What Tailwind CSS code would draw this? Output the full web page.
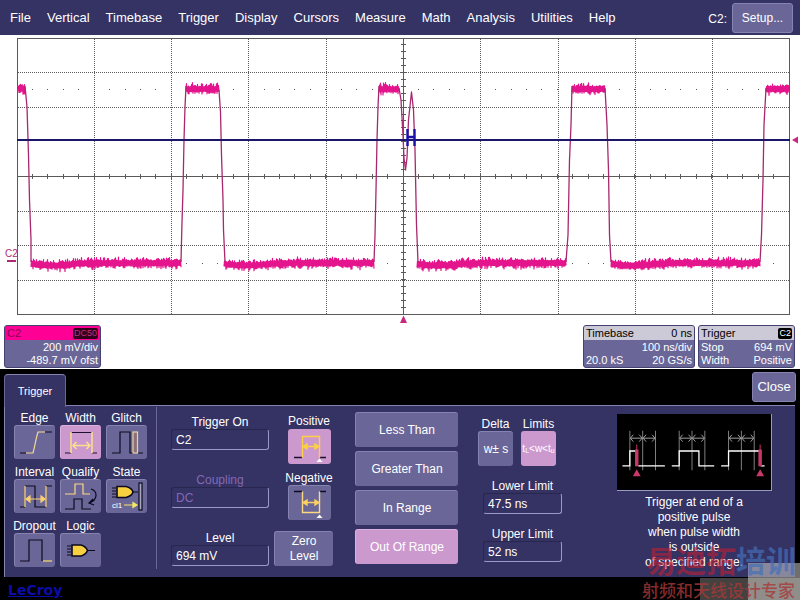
<!DOCTYPE html>
<html lang="en">

<head>
    <meta charset="UTF-8" />
    <meta name="viewport" content="width=device-width, initial-scale=1.0" />
    <title>LeCroy - Trigger</title>
    <script src="https://cdn.jsdelivr.net/npm/@tailwindcss/browser@4"></script>
</head>

<body class="relative min-h-screen flex flex-col bg-black text-white text-[12px] leading-[14px] font-['Liberation_Sans',Arial,sans-serif]">
    <!-- MENU BAR -->
    <nav class="h-[35px] shrink-0 bg-[#353264] pl-[10px] pr-[7px] flex items-center gap-4 text-[13px]">
        <a href="#">File</a>
        <a href="#">Vertical</a>
        <a href="#">Timebase</a>
        <a href="#">Trigger</a>
        <a href="#">Display</a>
        <a href="#">Cursors</a>
        <a href="#">Measure</a>
        <a href="#">Math</a>
        <a href="#">Analysis</a>
        <a href="#">Utilities</a>
        <a href="#">Help</a>
        <div class="ml-auto flex items-center gap-[5px] text-[12px]">
            <span class="pt-[2px]">C2:</span>
            <button class="w-[61px] h-[30px] bg-[#6a6798] border border-[#8583b0] rounded-[3px]">Setup...</button>
        </div>
    </nav>

    <!-- WAVEFORM -->
    <main class="bg-white">
        <svg viewBox="0 35 800 290" class="block w-full h-auto" role="img" aria-label="Channel 2 waveform">
            <g id="grid" fill="none" stroke="#5c5a58" stroke-width="1">
                <rect x="17.5" y="38.5" width="772" height="276" />
                <path d="M17 176.5H789M403.5 38V315" />
                <path stroke-dasharray="1 1" d="M94.5 39V314M171.5 39V314M248.5 39V314M326.5 39V314M480.5 39V314M558.5 39V314M635.5 39V314M712.5 39V314" />
                <path stroke-dasharray="1 1" d="M18 72.5H789M18 107.5H789M18 211.5H789M18 245.5H789M18 280.5H789" />
                <path id="ticks" />
            </g>
            <path id="trace" fill="none" stroke="#e4148c" stroke-width="1.2" stroke-linejoin="round" />
            <path id="edges" fill="none" stroke="#a8286e" stroke-width="1.3" stroke-linejoin="round" />
            <path d="M17 140H790" stroke="#1c1668" stroke-width="2" />
            <path d="M407.5 129V146M414.5 129V146M407 137H415" stroke="#1a12a8" stroke-width="2.4" />
            <path d="M792 140L798 136.500V143.500Z" fill="#c82880" />
            <path d="M403.500 315.500L400 323H407Z" fill="#c82880" />
            <text x="5" y="257" font-size="10" fill="#b02878">C2</text>
            <path d="M7 261H16" stroke="#b02878" stroke-width="2" />
        </svg>

        <!-- DESCRIPTORS -->
        <div class="flex items-start gap-[3px] pl-1 pr-[5px] pb-px text-[11px] leading-[13px]">
            <section class="w-[97px] h-[43px] mr-auto bg-[#6a6798] border border-[#444270] rounded-[3px] overflow-hidden">
                <div class="h-[14px] px-[2px] flex justify-between items-center bg-[#ff0094] text-[#8a0050]">
                    <span>C2</span>
                    <span class="h-[11px] px-px bg-[#30001c] text-[#c03080] text-[9px] leading-[11px] rounded-xs">DC50</span>
                </div>
                <p class="text-right px-[2px] pt-px">200 mV/div</p>
                <p class="text-right px-[2px]">-489.7 mV ofst</p>
            </section>
            <section class="w-[112px] h-[43px] bg-[#6a6798] border border-[#444270] rounded-[3px] overflow-hidden">
                <div class="h-[14px] px-[2px] flex justify-between items-center bg-[#cccad6] text-black">
                    <span>Timebase</span><span>0 ns</span>
                </div>
                <p class="text-right px-[2px] pt-px">100 ns/div</p>
                <p class="flex justify-between px-[2px]"><span>20.0 kS</span><span>20 GS/s</span></p>
            </section>
            <section class="w-[97px] h-[43px] bg-[#6a6798] border border-[#444270] rounded-[3px] overflow-hidden">
                <div class="h-[14px] px-[2px] flex justify-between items-center bg-[#cccad6] text-black">
                    <span>Trigger</span>
                    <span class="h-[11px] px-px bg-black text-white text-[9px] leading-[11px] rounded-xs">C2</span>
                </div>
                <p class="flex justify-between px-[2px] pt-px"><span>Stop</span><span>694 mV</span></p>
                <p class="flex justify-between px-[2px]"><span>Width</span><span>Positive</span></p>
            </section>
        </div>
    </main>

    <!-- TAB STRIP -->
    <div class="flex justify-between items-start pl-1 pr-[4px] pt-[3px] h-[36px]">
        <button class="w-[62px] h-[33px] mt-[2px] bg-[#353264] border border-b-0 border-[#6a6798] border-t-[#8583b0] rounded-t-[4px] text-[11px] relative z-10">Trigger</button>
        <button class="w-[44px] h-[30px] bg-[#6a6798] border border-[#8583b0] rounded-[3px] text-[13px]">Close</button>
    </div>

    <!-- TRIGGER DIALOG -->
    <section class="ml-1 mr-[5px] h-[172px] flex items-start bg-[#353264] border-t border-l border-[#8583b0] pl-[9px]">
        <!-- trigger types -->
        <div class="grid grid-cols-[41px_41px_41px] gap-x-[5px] gap-y-[6px] pt-[5px]">
            <div>
                <label for="edge" class="flex justify-center">Edge</label>
                <button id="edge" class="block w-[41px] h-[34px] bg-[#6a6798] border-t border-l border-[#8583b0] rounded-[3px]">
                    <svg viewBox="0 0 40 33" class="w-[40px] h-[33px]" fill="none" stroke="#0c0a20" stroke-width="1.2">
                        <path d="M5 27H11M30 6H37" />
                        <path stroke="#f4d890" d="M11 27H18C20 20 21 12 23 6H30" />
                    </svg>
                </button>
            </div>
            <div>
                <label for="width" class="flex justify-center">Width</label>
                <button id="width" class="block w-[41px] h-[34px] bg-[#cc99cf] border-t border-l border-[#dcb0dc] rounded-[3px]">
                    <svg viewBox="0 0 40 33" class="w-[40px] h-[33px]" fill="none" stroke="#1c1230" stroke-width="1.2">
                        <path d="M4 27H10M10 6.500H31M31 27H36" />
                        <path stroke="#fbe08c" stroke-width="1.500" d="M10 6V27M31 6V27M12 19.500H29M15.500 16L12 19.500L15.500 23M25.500 16L29 19.500L25.500 23" />
                    </svg>
                </button>
            </div>
            <div>
                <label for="glitch" class="flex justify-center">Glitch</label>
                <button id="glitch" class="block w-[41px] h-[34px] bg-[#6a6798] border-t border-l border-[#8583b0] rounded-[3px]">
                    <svg viewBox="0 0 40 33" class="w-[40px] h-[33px]" fill="none" stroke="#0c0a20" stroke-width="1.2">
                        <path d="M5 27H13V6H23V27H26M31 27H36" />
                        <rect x="26" y="6" width="4.500" height="21" fill="#8c7078" stroke="#e8d0a0" />
                    </svg>
                </button>
            </div>
            <div>
                <label for="interval" class="flex justify-center">Interval</label>
                <button id="interval" class="block w-[41px] h-[34px] bg-[#6a6798] border-t border-l border-[#8583b0] rounded-[3px]">
                    <svg viewBox="0 0 40 33" class="w-[40px] h-[33px]" fill="none" stroke="#0c0a20" stroke-width="1.2">
                        <path d="M5 27H10M10 6H20V27H31M31 6H37" />
                        <path stroke="#fcd070" d="M10 6V27M31 6V27" />
                        <path stroke="#fcd070" fill="#fcd070" d="M12 19H29M11 19L15 16V22ZM30 19L26 16V22Z" />
                    </svg>
                </button>
            </div>
            <div>
                <label for="qualify" class="flex justify-center">Qualify</label>
                <button id="qualify" class="block w-[41px] h-[34px] bg-[#6a6798] border-t border-l border-[#8583b0] rounded-[3px]">
                    <svg viewBox="0 0 40 33" class="w-[40px] h-[33px]" fill="none" stroke="#0c0a20" stroke-width="1.2">
                        <path stroke="#fcd880" d="M4 14H14V4H22V14H29" />
                        <path d="M4 29H13V19H21V29H30M30 9C37 11 37 20 28 23M32 19L28 23L33 25" />
                    </svg>
                </button>
            </div>
            <div>
                <label for="state" class="flex justify-center">State</label>
                <button id="state" class="block w-[41px] h-[34px] bg-[#6a6798] border-t border-l border-[#8583b0] rounded-[3px]">
                    <svg viewBox="0 0 40 33" class="w-[40px] h-[33px]" fill="none" stroke="#0c0a20" stroke-width="1.2">
                        <path d="M5 8H9M5 11H9M5 14H9M5 17H9M25 12H31" />
                        <path fill="#f8d040" stroke-width="1.600" d="M10 6.500H19Q25 8 26 12Q25 16 19 17.500H10Z" />
                        <rect x="32" y="3" width="3" height="27" fill="#a8a6c0" />
                        <path stroke="#f8e860" fill="#f8e860" d="M17 25H30M30 25L26 22.500V27.500Z" />
                        <text x="5" y="28" font-size="8" fill="#fff" stroke="none">cl1</text>
                    </svg>
                </button>
            </div>
            <div>
                <label for="dropout" class="flex justify-center">Dropout</label>
                <button id="dropout" class="block w-[41px] h-[34px] bg-[#6a6798] border-t border-l border-[#8583b0] rounded-[3px]">
                    <svg viewBox="0 0 40 33" class="w-[40px] h-[33px]" fill="none" stroke="#0c0a20" stroke-width="1.2">
                        <path d="M5 27H14V6H27V27" />
                        <path stroke="#f4e070" d="M28 27H37" />
                    </svg>
                </button>
            </div>
            <div>
                <label for="logic" class="flex justify-center">Logic</label>
                <button id="logic" class="block w-[41px] h-[34px] bg-[#6a6798] border-t border-l border-[#8583b0] rounded-[3px]">
                    <svg viewBox="0 0 40 33" class="w-[40px] h-[33px]" fill="none" stroke="#0c0a20" stroke-width="1.2">
                        <path d="M6 12H10M6 15H10M6 18H10M6 21H10M26 16.500H34" />
                        <path fill="#f8d040" stroke-width="1.600" d="M11 11H20Q25 12.500 26.500 16.500Q25 20.500 20 22H11Z" />
                    </svg>
                </button>
            </div>
        </div>
        <div class="w-px h-[162px] mt-[1px] ml-[9px] mr-[14px] bg-[#6a6798]"></div>

        <!-- source, coupling, level -->
        <div class="w-[98px] pt-[9px] flex flex-col gap-[23px]">
            <div>
                <label for="source" class="block text-center">Trigger On</label>
                <input id="source" value="C2" class="block w-full h-[21px] pl-[4px] bg-transparent border border-t-[#28264e] border-l-[#28264e] border-r-[#9a98c4] border-b-[#9a98c4] rounded-[3px]" />
            </div>
            <div class="text-[#8468b4]">
                <label for="coupling" class="block text-center">Coupling</label>
                <input id="coupling" value="DC" disabled class="block w-full h-[21px] pl-[4px] bg-transparent border border-t-[#28264e] border-l-[#28264e] border-r-[#9a98c4] border-b-[#9a98c4] rounded-[3px]" />
            </div>
            <div>
                <label for="level" class="block text-center">Level</label>
                <input id="level" value="694 mV" class="block w-full h-[21px] pl-[4px] bg-transparent border border-t-[#28264e] border-l-[#28264e] border-r-[#9a98c4] border-b-[#9a98c4] rounded-[3px]" />
            </div>
        </div>

        <!-- slope -->
        <div class="w-[70px] ml-[5px] pt-[8px] flex flex-col items-center">
            <label for="positive">Positive</label>
            <button id="positive" class="w-[43px] h-[35px] mt-[1px] mb-[7px] bg-[#cc99cf] rounded-[3px]">
                <svg viewBox="0 0 43 35" class="block w-[43px] h-[35px]" fill="none" stroke="#1c1230" stroke-width="1.4">
                    <path d="M6 28.500H14M32 28.500H38" />
                    <path stroke="#fcd040" d="M14.500 28.500V7.500H31.500V28.500" />
                    <path stroke="#fcd040" fill="#fcd040" d="M16 17.500H30M15 17.500L19 15V20ZM31 17.500L27 15V20Z" />
                    <path fill="#fff" stroke="none" d="M31.500 29.500L28.500 33H34.500Z" />
                </svg>
            </button>
            <label for="negative">Negative</label>
            <button id="negative" class="w-[43px] h-[35px] mb-[11px] bg-[#6a6798] border-t border-l border-[#8583b0] rounded-[3px]">
                <svg viewBox="1 1 42 34" class="block w-[42px] h-[34px]" fill="none" stroke="#0c0a20" stroke-width="1.4">
                    <path d="M6 6.500H14M32 6.500H38" />
                    <path stroke="#fcd880" d="M14.500 6.500V27.500H31.500V6.500" />
                    <path stroke="#fcd060" fill="#fcd060" d="M16 17.500H30M15 17.500L19 15V20ZM31 17.500L27 15V20Z" />
                    <path fill="#fff" stroke="none" d="M31.500 29.500L28.500 33H34.500Z" />
                </svg>
            </button>
            <button class="self-start w-[59px] h-[35px] bg-[#6a6798] border-t border-l border-[#8583b0] rounded-[3px] leading-[15px]">Zero<br />Level</button>
        </div>

        <!-- condition -->
        <div class="w-[103px] ml-[11px] pt-[6px] flex flex-col gap-[4px]">
            <button class="h-[35px] bg-[#6a6798] border-t border-l border-[#8583b0] rounded-[3px]">Less Than</button>
            <button class="h-[35px] bg-[#6a6798] border-t border-l border-[#8583b0] rounded-[3px]">Greater Than</button>
            <button class="h-[35px] bg-[#6a6798] border-t border-l border-[#8583b0] rounded-[3px]">In Range</button>
            <button class="h-[35px] bg-[#cc99cf] border-t border-l border-[#dcb0dc] rounded-[3px]">Out Of Range</button>
        </div>

        <!-- limits -->
        <div class="w-[84px] ml-[20px] pt-[11px]">
            <div class="flex gap-[8px]">
                <div class="w-[35px]">
                    <label for="delta" class="flex justify-center">Delta</label>
                    <button id="delta" class="block w-full h-[35px] bg-[#6a6798] border-t border-l border-[#8583b0] rounded-[3px]">w± s</button>
                </div>
                <div class="w-[35px]">
                    <label for="limits" class="flex justify-center">Limits</label>
                    <button id="limits" class="block w-full h-[35px] bg-[#cc99cf] rounded-[3px] text-[10px] whitespace-nowrap">t<sub class="text-[7px]">L</sub>&lt;w&lt;t<sub class="text-[7px]">u</sub></button>
                </div>
            </div>
            <div class="pl-[5px] pt-[13px] flex flex-col gap-[13px]">
                <div>
                    <label for="lower" class="block text-center">Lower Limit</label>
                    <input id="lower" value="47.5 ns" class="block w-full h-[21px] pl-[4px] bg-transparent border border-t-[#28264e] border-l-[#28264e] border-r-[#9a98c4] border-b-[#9a98c4] rounded-[3px]" />
                </div>
                <div>
                    <label for="upper" class="block text-center">Upper Limit</label>
                    <input id="upper" value="52 ns" class="block w-full h-[21px] pl-[4px] bg-transparent border border-t-[#28264e] border-l-[#28264e] border-r-[#9a98c4] border-b-[#9a98c4] rounded-[3px]" />
                </div>
            </div>
        </div>

        <!-- description -->
        <div class="flex-1 pl-[31px] pt-[8px] flex flex-col items-center">
            <svg viewBox="0 0 155 77" class="w-[155px] h-[77px] bg-black border-b border-r border-[#9a98c4]" fill="none" stroke="#a0a0a0">
                <path stroke="#808080" d="M12.500 17V57M25.500 17V57M38.500 17V57M62.500 17V57M75.500 17V57M88.500 17V57M112.500 17V57M125.500 17V57M138.500 17V57" />
                <path d="M13 24.500H38M63 24.500H88M113 24.500H138" />
                <path d="M16 21L13 24.500L16 28M22 21L25 24.500L22 28M29 21L26 24.500L29 28M35 21L38 24.500L35 28M66 21L63 24.500L66 28M72 21L75 24.500L72 28M79 21L76 24.500L79 28M85 21L88 24.500L85 28M116 21L113 24.500L116 28M122 21L125 24.500L122 28M129 21L126 24.500L129 28M135 21L138 24.500L135 28" />
                <path stroke="#fff" stroke-width="1.300" d="M5 52.500H12.500V37.500H19M21 52.500H48M55 52.500H62.500V37.500H82.500V52.500H98M105 52.500H112.500V37.500H144M145 52.500H149" />
                <path stroke="#c83868" stroke-width="3.500" d="M19.500 36V53M144.500 36V53" />
                <path stroke="#c83868" d="M19.500 31V53M144.500 31V53" />
                <path fill="#c83868" stroke="none" d="M19.500 56L15.500 63H23.500ZM144.500 56L140.500 63H148.500Z" />
            </svg>
            <p class="pt-[4px] text-center leading-[15px]">Trigger at end of a<br />positive pulse<br />when pulse width<br />is outside<br />of specified range.</p>
        </div>
    </section>

    <footer class="h-[23px] pl-[8px] pt-[4px]">
        <a href="#" class="font-['DejaVu_Sans',sans-serif] font-bold text-[14px] leading-[18px] text-[#0c0ca8] underline">LeCroy</a>
    </footer>

    <!-- WATERMARK -->
    <div class="absolute right-0 bottom-0 w-[160px] h-[56px] pointer-events-none whitespace-nowrap font-['Noto_Sans_CJK_SC',sans-serif] font-bold">
        <div class="absolute right-0 bottom-0 w-[52px] h-[37px] bg-[#dedcd4]/50"></div>
        <div class="absolute right-0 bottom-0 w-[100px] h-[22px] bg-[#dedcd4]/30"></div>
        <p class="absolute left-[6px] top-0 text-[30px] leading-[30px]"><span class="text-[#c02030]/60">易迪拓</span><span class="text-[#4470b8]/70">培训</span></p>
        <p class="absolute left-[2px] bottom-0 text-[17px] leading-[20px] font-medium text-[#a83838]/80">射频和天线设计专家</p>
    </div>

    <script>
        // minor ticks on both axes and the dotted high / low rows
        let ticks = '';
        for (let i = 1; i < 50; i++) {
            const x = Math.floor(17 + i * 15.44) + 0.5;
            ticks += `M${x} 174V179M${x} 89V90M${x} 263V264`;
        }
        for (let i = 1; i < 40; i++) {
            const y = Math.floor(38 + i * 6.91) + 0.5;
            ticks += `M401 ${y}H406`;
        }
        document.getElementById('ticks').setAttribute('d', ticks);

        // [from, to, base level] for each flat part of the signal
        const flats = [
            [18, 25, 88.5], [31, 181, 263], [186, 219, 89], [224, 374, 263], [379, 399, 89],
            [417, 566, 263], [572, 605, 89], [611, 760, 263], [766, 789, 89]
        ];

        // seeded so that the trace is the same on each load
        let seed = 7;
        function rnd() {
            seed = (seed * 16807) % 2147483647;
            return seed / 2147483647;
        }

        let trace = '';
        flats.forEach(([from, to, base]) => {
            let side = 1;
            for (let x = from; x <= to; x += 0.5) {
                const dip = base > 200 ? 2.5 * Math.exp(-Math.pow((x - from - 22) / 22, 2)) : 0;
                const y = base + dip + side * (2.2 + rnd() * rnd() * 4.5);
                trace += (x === from ? 'M' : 'L') + x + ' ' + y.toFixed(1);
                side = -side;
            }
        });
        document.getElementById('trace').setAttribute('d', trace);

        const edges = [
            'M25 86L27 107L28.5 155L29.5 200L31 240V262',
            'M181 262L182 222L183 190L184 140L185 107L186 86',
            'M219 90L220.5 112L221.5 155L223 200L223.5 230L225 262',
            'M374 262L375 235L376 190L377 140L378 107L379 86',
            'M399 88L401 100L403 135L404 158L405.5 170L407 158L408.5 120L411.5 92L413.5 110L415 150L416 200L416.5 225L418 262',
            'M566 262L568 235L569.5 160L571 125L572 86',
            'M605 88L607 125L608.5 170L609.5 235L611 262',
            'M760 262L761.5 235L763 180L764 125L766 88'
        ];
        document.getElementById('edges').setAttribute('d', edges.join(''));
    </script>
</body>

</html>
